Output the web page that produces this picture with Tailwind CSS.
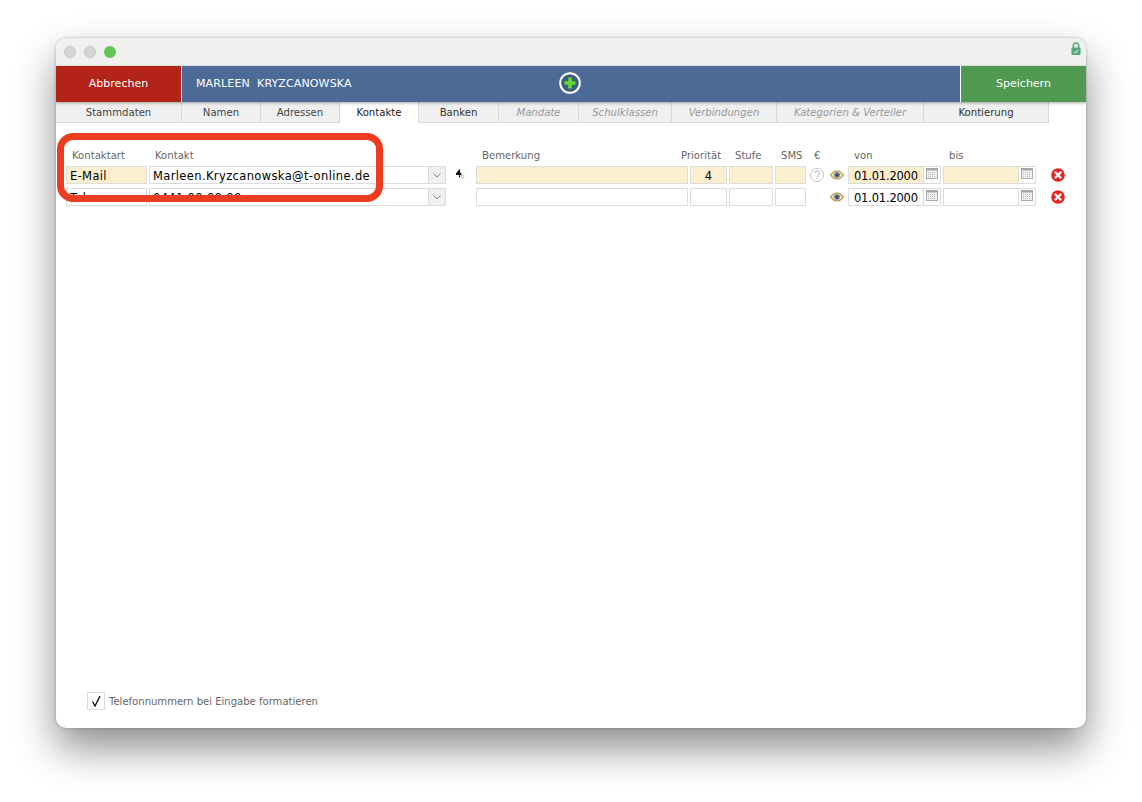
<!DOCTYPE html>
<html lang="de">
<head>
<meta charset="utf-8">
<script src="https://cdn.jsdelivr.net/npm/@tailwindcss/browser@4"></script>
<title>Kontakte</title>
</head>
<body class="bg-white w-[1142px] h-[802px] overflow-hidden font-['DejaVu_Sans',sans-serif]">
<div class="pt-[38px] pl-[56px]">
  <div class="relative w-[1030px] h-[690px] rounded-[10px] bg-white shadow-[0_20px_40px_rgba(0,0,0,0.45),0_0_3px_rgba(0,0,0,0.28)] overflow-hidden">
    <!-- title bar -->
    <div class="h-[28px] bg-[#f0f0ef] flex items-center justify-between pl-[8px] pr-[5px]">
      <div class="flex gap-[8px]">
        <span class="w-[12px] h-[12px] rounded-full bg-[#d5d4d3] border border-[#c8c7c6]"></span>
        <span class="w-[12px] h-[12px] rounded-full bg-[#d5d4d3] border border-[#c8c7c6]"></span>
        <span class="w-[12px] h-[12px] rounded-full bg-[#62c554]"></span>
      </div>
      <svg width="10" height="13" viewBox="0 0 10 13" class="-mt-[7px]"><path d="M2.3 6V3.6a2.7 2.7 0 0 1 5.4 0V6" fill="none" stroke="#55a877" stroke-width="1.5"/><rect x="0.5" y="5.5" width="9" height="7.5" rx="0.8" fill="#55a877"/><path d="M3 9.5l1.5 1.5 2.6-3" fill="none" stroke="#fff" stroke-width="0.9"/></svg>
    </div>
    <!-- header -->
    <div class="relative z-10 h-[36px] flex bg-[#4c6a96] shadow-[0_1px_3px_rgba(0,0,0,0.35)] text-white text-[11px]">
      <div class="w-[125px] bg-[#b32317] flex items-center justify-center">Abbrechen</div>
      <div class="w-px bg-[#d8dfe8]"></div>
      <div class="w-[778px] relative flex items-center pl-[14px]">
        <span class="whitespace-pre tracking-[0.13px]">MARLEEN  KRYZCANOWSKA</span>
        <svg width="22" height="22" viewBox="0 0 22 22" class="absolute left-[377px] top-[6px]"><circle cx="11" cy="11" r="9.8" fill="#3f5b80" stroke="#fff" stroke-width="2"/><path d="M11 5.5v11M5.5 11h11" stroke="#5fdc2c" stroke-width="3.6"/></svg>
      </div>
      <div class="w-px bg-white"></div>
      <div class="flex-1 bg-[#4f9a50] flex items-center justify-center">Speichern</div>
    </div>
    <!-- tabs -->
    <div class="flex h-[21px] text-[10.15px] text-[#444]">
      <div class="w-[126px] pt-[1px] bg-[#f0f0f0] border-b border-r border-[#d8d8d8] flex items-center justify-center">Stammdaten</div>
      <div class="w-[79px] pt-[1px] bg-[#f0f0f0] border-b border-r border-[#d8d8d8] flex items-center justify-center">Namen</div>
      <div class="w-[79px] pt-[1px] bg-[#f0f0f0] border-b border-r border-[#d8d8d8] flex items-center justify-center">Adressen</div>
      <div class="w-[79px] pt-[1px] bg-white border-r border-[#d8d8d8] flex items-center justify-center text-[#222]">Kontakte</div>
      <div class="w-[80px] pt-[1px] bg-[#f0f0f0] border-b border-r border-[#d8d8d8] flex items-center justify-center text-[#333]">Banken</div>
      <div class="w-[80px] pt-[1px] bg-[#f0f0f0] border-b border-r border-[#d8d8d8] flex items-center justify-center italic text-[#999]">Mandate</div>
      <div class="w-[93px] pt-[1px] bg-[#f0f0f0] border-b border-r border-[#d8d8d8] flex items-center justify-center italic text-[#999]">Schulklassen</div>
      <div class="w-[105px] pt-[1px] bg-[#f0f0f0] border-b border-r border-[#d8d8d8] flex items-center justify-center italic text-[#999]">Verbindungen</div>
      <div class="w-[147px] pt-[1px] bg-[#f0f0f0] border-b border-r border-[#d8d8d8] flex items-center justify-center italic text-[#999]">Kategorien &amp; Verteiler</div>
      <div class="w-[125px] pt-[1px] bg-[#f0f0f0] border-b border-r border-[#d8d8d8] flex items-center justify-center text-[#333]">Kontierung</div>
    </div>
    <!-- labels -->
    <div class="relative h-[43px] text-[10.1px] text-[#666]">
      <span class="absolute left-[16px] top-[25px]">Kontaktart</span>
      <span class="absolute left-[99px] top-[25px]">Kontakt</span>
      <span class="absolute left-[426px] top-[25px]">Bemerkung</span>
      <span class="absolute left-[625px] top-[25px]">Priorität</span>
      <span class="absolute left-[679px] top-[25px]">Stufe</span>
      <span class="absolute left-[725px] top-[25px]">SMS</span>
      <span class="absolute left-[758px] top-[25px]">€</span>
      <span class="absolute left-[798px] top-[25px]">von</span>
      <span class="absolute left-[893px] top-[25px]">bis</span>
    </div>
    <!-- row 1 -->
    <div class="flex h-[18px] ml-[10px] text-[11.5px] text-black">
      <div class="w-[81px] bg-[#fcefd0] border border-[#dcdcdc] pl-[3px] leading-[18px] tracking-[0.35px]">E-Mail</div>
      <div class="w-[280px] ml-[2px] bg-white border border-[#dcdcdc] pl-[3px] leading-[18px] whitespace-nowrap tracking-[0.37px]">Marleen.Kryzcanowska@t-online.de</div>
      <div class="w-[17px] bg-[#f0f0f0] border border-l-0 border-[#dcdcdc] flex items-center justify-center"><svg width="8" height="5" viewBox="0 0 8 5"><path d="M0.5 0.5L4 4l3.5-3.5" fill="none" stroke="#777" stroke-width="0.9"/></svg></div>
      <div class="w-[10px] ml-[9px] pt-[3px]"><svg width="10" height="10" viewBox="0 0 10 10"><path d="M4 0.5L5 0.5 5 3 7 5.5 5 6 5 8.5 4 8.5 4 6 0.8 6 1 4.5Z" fill="#111"/><circle cx="7.5" cy="7.5" r="1.5" fill="none" stroke="#999" stroke-width="0.6"/></svg></div>
      <div class="w-[212px] ml-[11px] bg-[#fcefd0] border border-[#dcdcdc]"></div>
      <div class="w-[37px] ml-[2px] bg-[#fcefd0] border border-[#dcdcdc] text-center leading-[18px]">4</div>
      <div class="w-[44px] ml-[2px] bg-[#fcefd0] border border-[#dcdcdc]"></div>
      <div class="w-[31px] ml-[2px] bg-[#fcefd0] border border-[#dcdcdc]"></div>
      <div class="w-[14px] ml-[4px] flex items-center"><svg width="14" height="14" viewBox="0 0 14 14"><circle cx="7" cy="7" r="6.5" fill="#fff" stroke="#b5b5b5" stroke-width="0.8"/><path d="M4.6 5.2a2.4 2.4 0 1 1 3.6 2.1c-.8.5-1.2.9-1.2 1.9M7 10v1.2" fill="none" stroke="#aaa" stroke-width="1"/></svg></div>
      <div class="w-[14px] ml-[6px] flex items-center"><svg width="14" height="10" viewBox="0 0 14 10"><path d="M0.5 5C3 1.5 5 1 7 1s4 .5 6.5 4C11 8.5 9 9 7 9S3 8.5.5 5Z" fill="#e8d9b8" stroke="#b98a3a" stroke-width="1.1"/><circle cx="7" cy="5" r="2.8" fill="#5f7686"/><circle cx="7" cy="5" r="1.1" fill="#2c3a44"/></svg></div>
      <div class="w-[76px] ml-[4px] bg-[#fcefd0] border border-[#dcdcdc] pl-[5px] leading-[18px] tracking-[-0.2px]">01.01.2000</div>
      <div class="w-[17px] bg-white border border-l-0 border-[#dcdcdc] pl-[2px] pt-[1px]"><svg width="12" height="11" viewBox="0 0 12 11"><rect x="0.5" y="0.5" width="11" height="10" fill="#f2f2f2" stroke="#aaa"/><rect x="0" y="0" width="12" height="2.5" fill="#a5a5a5"/><path d="M2 4.5h8M2 6.5h8M2 8.5h8" stroke="#b5b5b5" stroke-dasharray="1 1"/></svg></div>
      <div class="w-[76px] ml-[2px] bg-[#fcefd0] border border-[#dcdcdc]"></div>
      <div class="w-[17px] bg-white border border-l-0 border-[#dcdcdc] pl-[2px] pt-[1px]"><svg width="12" height="11" viewBox="0 0 12 11"><rect x="0.5" y="0.5" width="11" height="10" fill="#f2f2f2" stroke="#aaa"/><rect x="0" y="0" width="12" height="2.5" fill="#a5a5a5"/><path d="M2 4.5h8M2 6.5h8M2 8.5h8" stroke="#b5b5b5" stroke-dasharray="1 1"/></svg></div>
      <div class="w-[14px] ml-[15px] flex items-center"><svg width="14" height="14" viewBox="0 0 14 14"><circle cx="7" cy="7" r="6.8" fill="#e2231f"/><path d="M3.8 3.8l6.4 6.4M10.2 3.8l-6.4 6.4" stroke="#fff" stroke-width="2.3"/></svg></div>
    </div>
    <!-- row 2 -->
    <div class="flex h-[18px] mt-[4px] ml-[10px] text-[11.5px] text-black">
      <div class="w-[81px] bg-white border border-[#dcdcdc] pl-[3px] leading-[18px] tracking-[0.35px]">Tel.</div>
      <div class="w-[280px] ml-[2px] bg-white border border-[#dcdcdc] pl-[3px] leading-[18px] whitespace-nowrap tracking-[0.37px]">0441 99 99 99</div>
      <div class="w-[17px] bg-[#f0f0f0] border border-l-0 border-[#dcdcdc] flex items-center justify-center"><svg width="8" height="5" viewBox="0 0 8 5"><path d="M0.5 0.5L4 4l3.5-3.5" fill="none" stroke="#777" stroke-width="0.9"/></svg></div>
      <div class="w-[10px] ml-[9px]"></div>
      <div class="w-[212px] ml-[11px] bg-white border border-[#dcdcdc]"></div>
      <div class="w-[37px] ml-[2px] bg-white border border-[#dcdcdc]"></div>
      <div class="w-[44px] ml-[2px] bg-white border border-[#dcdcdc]"></div>
      <div class="w-[31px] ml-[2px] bg-white border border-[#dcdcdc]"></div>
      <div class="w-[14px] ml-[4px]"></div>
      <div class="w-[14px] ml-[6px] flex items-center"><svg width="14" height="10" viewBox="0 0 14 10"><path d="M0.5 5C3 1.5 5 1 7 1s4 .5 6.5 4C11 8.5 9 9 7 9S3 8.5.5 5Z" fill="#e8d9b8" stroke="#b98a3a" stroke-width="1.1"/><circle cx="7" cy="5" r="2.8" fill="#5f7686"/><circle cx="7" cy="5" r="1.1" fill="#2c3a44"/></svg></div>
      <div class="w-[76px] ml-[4px] bg-white border border-[#dcdcdc] pl-[5px] leading-[18px] tracking-[-0.2px]">01.01.2000</div>
      <div class="w-[17px] bg-white border border-l-0 border-[#dcdcdc] pl-[2px] pt-[1px]"><svg width="12" height="11" viewBox="0 0 12 11"><rect x="0.5" y="0.5" width="11" height="10" fill="#f2f2f2" stroke="#aaa"/><rect x="0" y="0" width="12" height="2.5" fill="#a5a5a5"/><path d="M2 4.5h8M2 6.5h8M2 8.5h8" stroke="#b5b5b5" stroke-dasharray="1 1"/></svg></div>
      <div class="w-[76px] ml-[2px] bg-white border border-[#dcdcdc]"></div>
      <div class="w-[17px] bg-white border border-l-0 border-[#dcdcdc] pl-[2px] pt-[1px]"><svg width="12" height="11" viewBox="0 0 12 11"><rect x="0.5" y="0.5" width="11" height="10" fill="#f2f2f2" stroke="#aaa"/><rect x="0" y="0" width="12" height="2.5" fill="#a5a5a5"/><path d="M2 4.5h8M2 6.5h8M2 8.5h8" stroke="#b5b5b5" stroke-dasharray="1 1"/></svg></div>
      <div class="w-[14px] ml-[15px] flex items-center"><svg width="14" height="14" viewBox="0 0 14 14"><circle cx="7" cy="7" r="6.8" fill="#e2231f"/><path d="M3.8 3.8l6.4 6.4M10.2 3.8l-6.4 6.4" stroke="#fff" stroke-width="2.3"/></svg></div>
    </div>
    <!-- checkbox -->
    <div class="absolute left-[31px] bottom-[18px] flex items-center gap-[4px] text-[10.05px] text-[#666]">
      <div class="w-[18px] h-[18px] border border-[#dcdcdc] flex items-center justify-center"><svg width="11" height="12" viewBox="0 0 11 12"><path d="M1.5 6.5L4 11 9 1" fill="none" stroke="#111" stroke-width="1.4"/></svg></div>
      <span class="pt-[1px]">Telefonnummern bei Eingabe formatieren</span>
    </div>
    <!-- annotation -->
    <div class="absolute left-[1px] top-[95px] w-[326px] h-[69px] border-[7px] border-[#ec3d21] rounded-[16px]"></div>
  </div>
</div>
</body>
</html>
